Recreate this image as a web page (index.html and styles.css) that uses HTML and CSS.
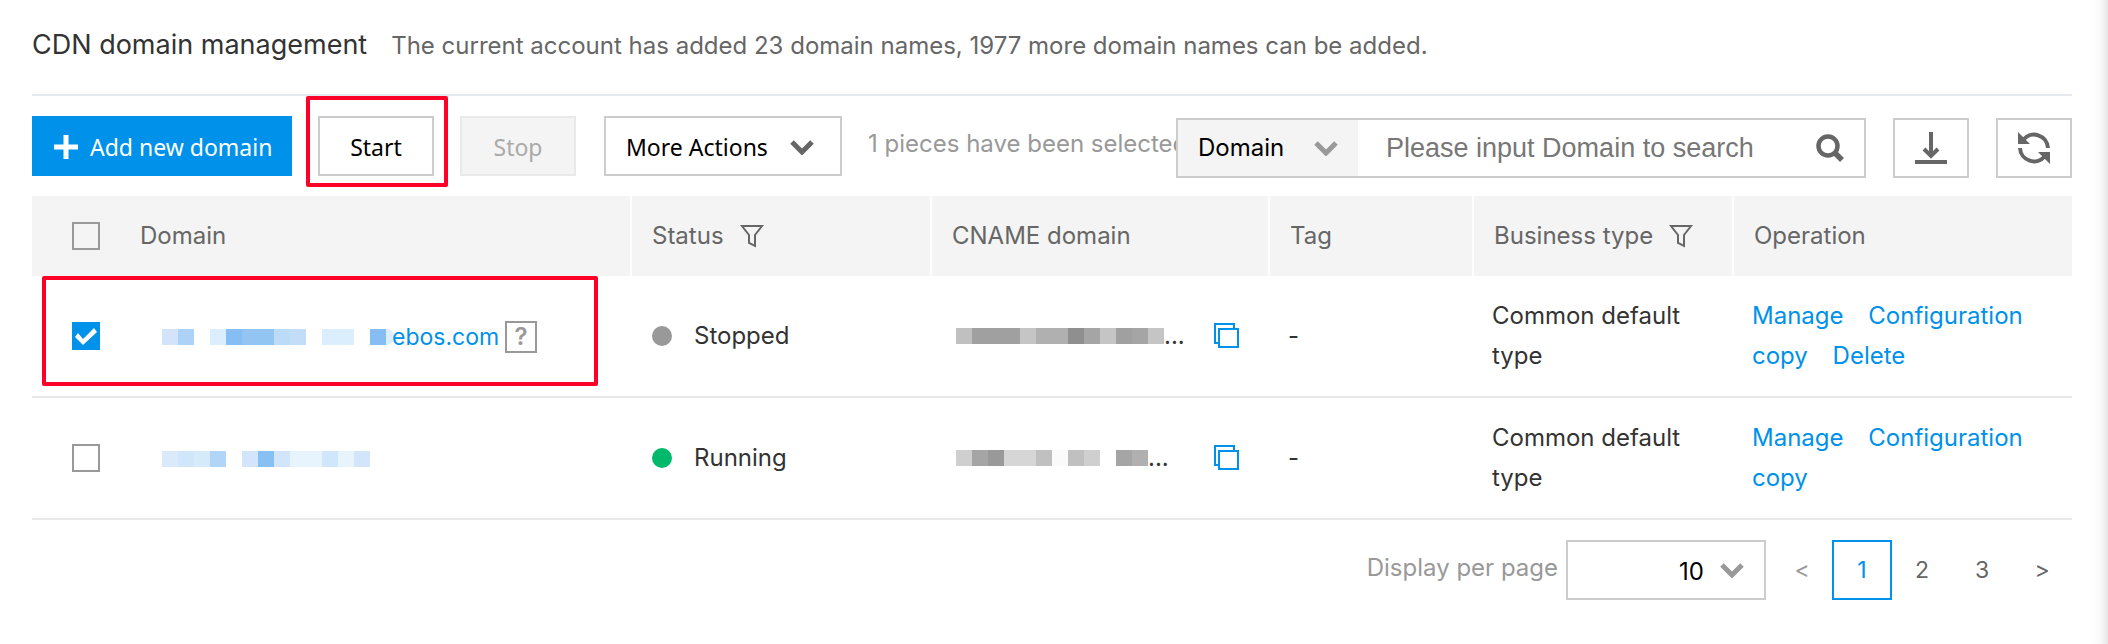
FILE: index.html
```html
<!DOCTYPE html>
<html lang="en">
<head>
    <meta charset="UTF-8">
    <title>CDN domain management</title>
    <link rel="stylesheet" href="styles.css">
</head>
<body>
    <main class="page">
        <header class="page-header">
            <h1>CDN domain management</h1>
            <p>The current account has added 23 domain names, 1977 more domain names can be added.</p>
        </header>

        <div class="toolbar">
            <div class="actions">
                <button type="button" class="btn btn-primary">
                    <svg width="24" height="24" viewBox="0 0 24 24"><path d="M12 0v24M0 12h24" stroke="#fff" stroke-width="5"/></svg>
                    Add new domain
                </button>
                <span class="highlight highlight-start"><button type="button" class="btn">Start</button></span>
                <button type="button" class="btn" disabled>Stop</button>
                <button type="button" class="btn btn-more">
                    More Actions
                    <svg class="chevron dark" width="24" height="16" viewBox="0 0 24 16"><path d="M2 3l10 10L22 3"/></svg>
                </button>
            </div>
            <span class="selected-info">1 pieces have been selected</span>
            <div class="tools">
                <div class="search">
                    <div class="select-box search-type">
                        <select aria-label="Search by"><option>Domain</option></select>
                        <svg class="chevron" width="24" height="16" viewBox="0 0 24 16"><path d="M2 3l10 10L22 3"/></svg>
                    </div>
                    <input type="text" placeholder="Please input Domain to search" aria-label="Search domain">
                    <button type="button" class="search-btn" aria-label="Search">
                        <svg width="28" height="28" viewBox="0 0 28 28"><circle cx="12" cy="12" r="9.5" fill="none" stroke="#666" stroke-width="4.500"/><path d="M18 18l8 8" stroke="#666" stroke-width="5.500"/></svg>
                    </button>
                </div>
                <button type="button" class="icon-btn" aria-label="Download">
                    <svg width="32" height="32" viewBox="0 0 32 32"><path d="M16 0v24M9 17l7 7 7-7M0 30h32" fill="none" stroke="#666" stroke-width="4"/></svg>
                </button>
                <button type="button" class="icon-btn" aria-label="Refresh">
                    <svg width="32" height="32" viewBox="0 0 32 32"><path d="M5 8a14 14 0 0 1 25 8M2 16a14 14 0 0 0 25 8" fill="none" stroke="#666" stroke-width="4"/><path d="M0 0v12h12zM32 32V20H20z" fill="#666"/></svg>
                </button>
            </div>
        </div>

        <table class="domain-table">
            <colgroup>
                <col class="col-check">
                <col>
                <col class="col-status">
                <col class="col-cname">
                <col class="col-tag">
                <col class="col-type">
                <col class="col-operation">
            </colgroup>
            <thead>
                <tr>
                    <th class="check"><input type="checkbox" aria-label="Select all"></th>
                    <th class="divided">Domain</th>
                    <th class="divided"><span class="filter">Status <svg width="24" height="24" viewBox="0 0 24 24"><path d="M2 2h20l-7 9v11l-6-3v-8z" fill="none" stroke="#666" stroke-width="2"/></svg></span></th>
                    <th class="divided">CNAME domain</th>
                    <th class="divided">Tag</th>
                    <th class="divided"><span class="filter">Business type <svg width="24" height="24" viewBox="0 0 24 24"><path d="M2 2h20l-7 9v11l-6-3v-8z" fill="none" stroke="#666" stroke-width="2"/></svg></span></th>
                    <th>Operation</th>
                </tr>
            </thead>
            <tbody>
                <tr>
                    <td class="check highlight highlight-row"><input type="checkbox" checked aria-label="Select ebos.com"></td>
                    <td class="domain">
                        <div class="line">
                            <svg class="mask" width="234" height="16" viewBox="0 0 234 16">
                                <path fill="#d3e4fa" d="M0 0h16v16H0z"/>
                                <path fill="#acd2f8" d="M16 0h16v16H16z"/>
                                <path fill="#dbeefd" d="M48 0h16v16H48zM160 0h32v16h-32zM224 0q8 0 8 8t-8 8z"/>
                                <path fill="#86bdf3" d="M64 0h16v16H64zM208 0h16v16h-16z"/>
                                <path fill="#93c5f3" d="M80 0h32v16H80z"/>
                                <path fill="#bcdbf6" d="M112 0h16v16h-16z"/>
                                <path fill="#c3ddf8" d="M128 0h16v16h-16z"/>
                            </svg>
                            <a href="#" class="domain-link">ebos.com</a>
                            <button type="button" class="help" aria-label="Help">?</button>
                        </div>
                    </td>
                    <td><div class="line status"><i class="dot"></i>Stopped</div></td>
                    <td>
                        <div class="line cname">
                            <svg class="mask" width="208" height="16" viewBox="0 0 208 16">
                                <path fill="#c0c0c0" d="M0 0h16v16H0z"/>
                                <path fill="#a0a0a0" d="M16 0h48v16H16zM160 0h16v16h-16z"/>
                                <path fill="#c5c5c5" d="M64 0h16v16H64zM144 0h16v16h-16zM192 0h16v16h-16z"/>
                                <path fill="#b0b0b0" d="M80 0h32v16H80z"/>
                                <path fill="#8f8f8f" d="M112 0h16v16h-16z"/>
                                <path fill="#a5a5a5" d="M128 0h16v16h-16zM176 0h16v16h-16z"/>
                            </svg>
                            <span>...</span>
                            <button type="button" class="copy" aria-label="Copy">
                                <svg width="26" height="26" viewBox="0 0 26 26"><path d="M5 20H1V1h19v4M5 6h19v18H5z" fill="none" stroke="#0091ea" stroke-width="2"/></svg>
                            </button>
                        </div>
                    </td>
                    <td>-</td>
                    <td>Common default type</td>
                    <td class="operation"><a href="#">Manage</a> <a href="#">Configuration copy</a> <a href="#">Delete</a></td>
                </tr>
                <tr>
                    <td class="check"><input type="checkbox" aria-label="Select domain"></td>
                    <td class="domain">
                        <div class="line">
                            <svg class="mask" width="208" height="16" viewBox="0 0 208 16">
                                <path fill="#daeafa" d="M0 0h16v16H0z"/>
                                <path fill="#cfe6fb" d="M16 0h16v16H16zM160 0h16v16h-16z"/>
                                <path fill="#d6ebfa" d="M32 0h16v16H32z"/>
                                <path fill="#b0d5f9" d="M48 0h16v16H48z"/>
                                <path fill="#d3e5fb" d="M80 0h16v16H80zM112 0h16v16h-16zM192 0h16v16h-16z"/>
                                <path fill="#88c0f4" d="M96 0h16v16H96z"/>
                                <path fill="#e8f4fd" d="M128 0h32v16h-32zM176 0h16v16h-16z"/>
                            </svg>
                        </div>
                    </td>
                    <td><div class="line status"><i class="dot running"></i>Running</div></td>
                    <td>
                        <div class="line cname">
                            <svg class="mask" width="192" height="16" viewBox="0 0 192 16">
                                <path fill="#cfcfcf" d="M0 0h16v16H0zM128 0h16v16h-16z"/>
                                <path fill="#a5a5a5" d="M16 0h16v16H16zM160 0h16v16h-16z"/>
                                <path fill="#999" d="M32 0h16v16H32z"/>
                                <path fill="#d6d6d6" d="M48 0h32v16H48z"/>
                                <path fill="#c0c0c0" d="M80 0h16v16H80zM112 0h16v16h-16z"/>
                                <path fill="#fafafa" d="M96 0h16v16H96z"/>
                                <path fill="#b0b0b0" d="M176 0h16v16h-16z"/>
                            </svg>
                            <span>...</span>
                            <button type="button" class="copy" aria-label="Copy">
                                <svg width="26" height="26" viewBox="0 0 26 26"><path d="M5 20H1V1h19v4M5 6h19v18H5z" fill="none" stroke="#0091ea" stroke-width="2"/></svg>
                            </button>
                        </div>
                    </td>
                    <td>-</td>
                    <td>Common default type</td>
                    <td class="operation"><a href="#">Manage</a> <a href="#">Configuration copy</a></td>
                </tr>
            </tbody>
        </table>

        <footer class="pagination">
            <label for="pageSize">Display per page</label>
            <div class="select-box page-size">
                <select id="pageSize"><option>10</option></select>
                <svg class="chevron" width="24" height="16" viewBox="0 0 24 16"><path d="M2 3l10 10L22 3"/></svg>
            </div>
            <nav class="pages">
                <a href="#" class="prev">&lt;</a>
                <a href="#" class="current">1</a>
                <a href="#">2</a>
                <a href="#">3</a>
                <a href="#">&gt;</a>
            </nav>
        </footer>
    </main>
</body>
</html>
```
FILE: styles.css
```css
:root {
    --primary: #0091ea;
    --border: #ccc;
    --muted: #999;
    --gray: #666;
    --panel: #f4f4f4;
    --mark: #ff0028;
}

*, *::before, *::after {
    box-sizing: border-box;
}

body {
    margin: 0;
    background-color: #fff;
    color: #333;
    font-family: Inter, "Liberation Sans", sans-serif;
    font-size: 24px;
    line-height: 40px;
}

.page {
    min-height: 100vh;
    padding: 0 36px 0 32px;
    background: linear-gradient(to left, #e6e6e6, #fafafa 8px, #fff 18px);
}

button, input, select {
    font: inherit;
    margin: 0;
}

a {
    color: var(--primary);
    text-decoration: none;
}

svg {
    display: block;
    flex: none;
}

.page-header {
    display: flex;
    align-items: baseline;
    gap: 24px;
    height: 96px;
    padding-top: 25px;
    border-bottom: 2px solid #e6e9ed;
}

h1 {
    margin: 0;
    font-size: 27px;
    font-weight: 400;
}

.page-header p {
    margin: 0;
    color: var(--gray);
}

/* Toolbar */
.toolbar {
    display: flex;
    padding: 20px 0;
}

.actions {
    display: flex;
    gap: 26px;
}

.btn {
    height: 60px;
    min-width: 116px;
    padding: 2px 20px 0;
    border: 2px solid var(--border);
    background-color: #fff;
    color: #000;
    font-family: "Noto Sans", sans-serif;
    font-size: 23px;
    cursor: pointer;
}

.btn:disabled {
    border-color: #e9e9e9;
    background-color: var(--panel);
    color: #aaa;
}

.btn-primary {
    display: flex;
    align-items: center;
    gap: 12px;
    width: 260px;
    border-color: var(--primary);
    background-color: var(--primary);
    color: #fff;
    white-space: nowrap;
}

.btn-more {
    display: flex;
    align-items: center;
    justify-content: space-between;
    width: 238px;
    margin-left: 2px;
    padding-right: 26px;
}

.chevron path {
    fill: none;
    stroke: var(--muted);
    stroke-width: 5;
}

.chevron.dark path {
    stroke: var(--gray);
}

.selected-info {
    flex: 1;
    min-width: 0;
    height: 60px;
    padding-left: 26px;
    overflow: hidden;
    color: var(--muted);
    line-height: 56px;
    white-space: nowrap;
}

.tools {
    display: flex;
    gap: 27px;
    padding-top: 2px;
    margin-bottom: -2px;
}

.search {
    display: flex;
    align-items: center;
    width: 690px;
    height: 60px;
    border: 2px solid var(--border);
    background-color: #fff;
}

.select-box {
    position: relative;
    height: 100%;
}

.select-box select {
    width: 100%;
    height: 100%;
    border: none;
    background: none;
    color: #000;
    appearance: none;
}

.select-box .chevron {
    position: absolute;
    top: 50%;
    right: 20px;
    margin-top: -8px;
    pointer-events: none;
}

.search-type {
    width: 180px;
    background-color: var(--panel);
}

.search-type select {
    padding: 0 20px;
}

.search input {
    flex: 1;
    min-width: 0;
    padding: 0 0 0 28px;
    border: none;
    background: none;
    font-family: "Liberation Sans", sans-serif;
    font-size: 27px;
}

.search input::placeholder {
    color: #777;
}

.search-btn {
    padding: 0 20px;
    border: none;
    background: none;
}

.icon-btn {
    display: flex;
    align-items: center;
    justify-content: center;
    width: 76px;
    height: 60px;
    padding: 0;
    border: 2px solid var(--border);
    background-color: #fff;
}

/* Boxes drawn round the steps to follow */
.highlight {
    position: relative;
}

.highlight::after {
    content: "";
    position: absolute;
    border: 4px solid var(--mark);
    border-radius: 2px;
    pointer-events: none;
}

.highlight-start::after {
    inset: -20px -14px -11px -12px;
}

.highlight-row::after {
    top: 0;
    left: 10px;
    width: 556px;
    height: 110px;
}

/* Table */
.domain-table {
    width: 100%;
    border-collapse: separate;
    border-spacing: 0;
    table-layout: fixed;
}

.col-check {
    width: 88px;
}

.col-status {
    width: 300px;
}

.col-cname {
    width: 338px;
}

.col-tag {
    width: 204px;
}

.col-type {
    width: 260px;
}

.col-operation {
    width: 338px;
}

th {
    height: 80px;
    padding: 0 20px;
    background-color: var(--panel);
    color: var(--gray);
    font-weight: 400;
    text-align: left;
}

th.divided {
    border-right: 2px solid #fff;
}

td {
    padding: 20px 18px;
    border-bottom: 2px solid #e9e9e9;
}

.check {
    padding-left: 40px;
    padding-right: 0;
}

.check input {
    display: block;
    width: 28px;
    height: 28px;
    border: 2px solid var(--muted);
    appearance: none;
}

.check input:checked {
    border-color: var(--primary);
    background-color: var(--primary);
}

.check input:checked::before {
    content: "";
    display: block;
    width: 24px;
    height: 24px;
    background-color: #fff;
    clip-path: polygon(1px 13px, 4px 9px, 9px 15px, 20px 4px, 23px 8px, 9px 21px);
}

.filter, .line {
    display: flex;
    align-items: center;
}

.filter {
    gap: 16px;
}

.domain {
    padding-left: 42px;
}

.domain .line {
    padding-top: 2px;
}

.domain-link {
    margin-left: -4px;
    font-size: 23px;
}

.help {
    width: 32px;
    height: 32px;
    margin-left: 6px;
    padding: 0;
    border: 2px solid var(--muted);
    background-color: #fff;
    color: var(--muted);
    font-weight: 600;
    line-height: 28px;
}

.status {
    gap: 22px;
}

.dot {
    width: 20px;
    height: 20px;
    margin-left: 2px;
    border-radius: 50%;
    background-color: var(--muted);
}

.dot.running {
    background-color: #00b96b;
}

.cname .mask {
    margin-left: 6px;
}

.copy {
    margin-left: auto;
    margin-right: 12px;
    padding: 0;
    border: none;
    background: none;
}

.operation a {
    margin-right: 18px;
}

/* Pagination */
.pagination {
    display: flex;
    justify-content: flex-end;
    padding-top: 20px;
    line-height: 56px;
}

.pagination label {
    margin-right: 8px;
    color: var(--muted);
}

.page-size {
    width: 200px;
    height: 60px;
    border: 2px solid var(--border);
}

.page-size select {
    padding: 2px 60px 0 0;
    text-align: right;
    text-align-last: right;
}

.pages {
    display: flex;
    margin-left: 6px;
}

.pages a {
    width: 60px;
    height: 60px;
    border: 2px solid transparent;
    color: var(--gray);
    font-size: 23px;
    text-align: center;
}

.pages .prev {
    color: var(--muted);
}

.pages .current {
    border-color: var(--primary);
    color: var(--primary);
}
```
